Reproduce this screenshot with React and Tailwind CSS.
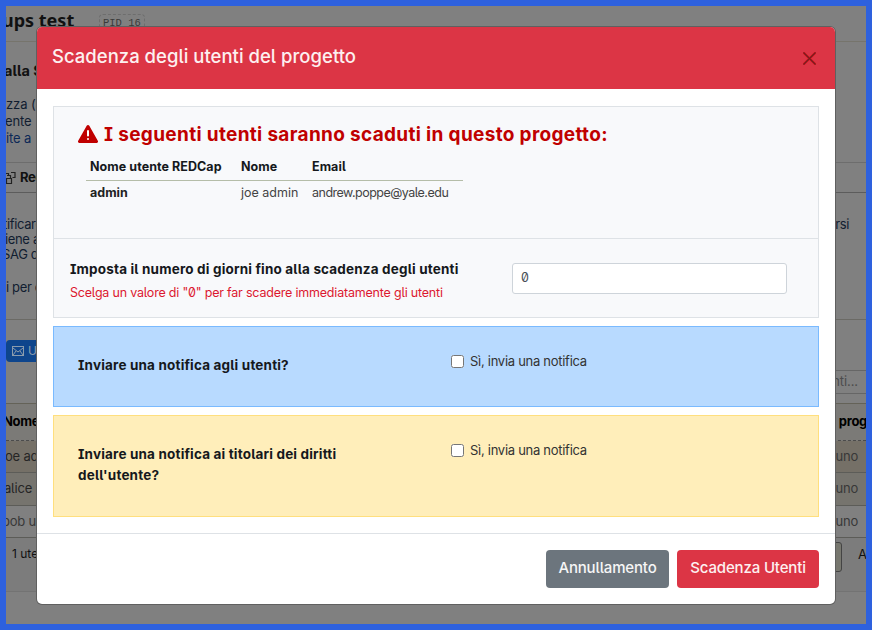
import React from "react";

const PAGE_TEXT = "whitespace-pre text-[13px] leading-[16px] tracking-[-0.35px] text-[#111d30]";

function Row({ className, left, right }) {
  return (
    <div className={`flex justify-between overflow-hidden ${className}`}>
      <div className="flex shrink-0 items-center whitespace-pre">{left}</div>
      <div className="flex shrink-0 items-center whitespace-pre">{right}</div>
    </div>
  );
}

function Page() {
  return (
    <div className="flex h-[618px] w-[860px] flex-col overflow-hidden bg-[#808080] text-[13px] text-[#111]">
      <div className="flex h-9 shrink-0 border-b border-[#76746c]">
        <h1 className="-ml-1 w-[97px] shrink-0 pt-px font-['Noto_Sans',sans-serif] text-[18px] font-bold leading-[26px]">ups test</h1>
        <span className="mt-2 h-5 rounded border border-dashed border-[#6e6e6e] px-[3px] font-['Liberation_Mono',monospace] text-[10.5px] leading-[16px] text-[#3a3a3a]">PID 16</span>
      </div>
      <div className="h-[121px] shrink-0 overflow-hidden border-b border-[#6d6d6d]">
        <h2 className="-ml-0.5 mt-5 whitespace-pre text-[14.5px] font-bold leading-[18px]">alla S</h2>
        <div className="mt-[16px] whitespace-pre text-[13px] leading-[17px] tracking-[-0.1px] text-[#111d30]">
          <p>zza (S</p>
          <p className="-ml-px">ente</p>
          <p className="text-[#0c2857]">ite a</p>
        </div>
      </div>
      <div className="flex h-[30px] shrink-0 items-center border-b border-[#5c5c5c] font-bold">
        <svg className="-ml-1 mr-1 size-[14px] shrink-0" viewBox="0 0 14 14" fill="none" stroke="#222" strokeWidth="1.2">
          <path d="M2 5V2.500h4.500V5M5 4.500h3.500v3M9 1.500h4v5h-2.500M4.500 7.500h5v5h-5z" />
        </svg>
        <span className="text-[13px] tracking-[-0.4px]">Reg</span>
      </div>
      <div className="h-[127px] shrink-0 overflow-hidden border-b border-[#6b6a65] pt-[23px]">
        <Row className="h-[16px]" left={<span className={PAGE_TEXT + " -ml-[3px]"}>tificare</span>} right={<span className={PAGE_TEXT + " pr-[17px]"}>rsi</span>} />
        <p className={PAGE_TEXT + " -ml-px -mt-px h-[15px]"}>iene a</p>
        <p className={PAGE_TEXT + " -ml-1 h-[15px]"}>SAG d</p>
        <p className={PAGE_TEXT + " mt-[18px]"}>i per o</p>
      </div>
      <div className="flex h-[84px] shrink-0 flex-col justify-between border-b border-[#646258] pb-[9px] pt-[20px]">
        <div className="flex h-[22px] w-[80px] shrink-0 items-center gap-1 rounded bg-[#0e458c] pl-[6px] text-[12px] text-[#8b9cad]">
          <svg className="h-[10px] w-[12px]" viewBox="0 0 12 10" fill="none" stroke="currentColor">
            <rect x=".5" y=".5" width="11" height="9" />
            <path d="m1 2 5 4 5-4M1 9l3-4M11 9 8 5" />
          </svg>
          <span>Ut</span>
        </div>
        <div className="-mt-3 flex h-6 shrink-0 items-center self-end border-y border-[#666] pr-[9px] text-[13px] tracking-[-0.1px] text-[#4c4c4c]"><span className="-mr-px">utenti...</span></div>
      </div>
      <Row className="h-[37px] shrink-0 border-b border-dashed border-[#4b4b4b] bg-[#7b7a77] font-bold tracking-[-0.3px] text-black" left={<span className="-ml-[3px]">Nome</span>} right={<span className="-mr-px">prog</span>} />
      <Row className="h-8 shrink-0 border-b border-[#5c5c58] bg-[#757067] tracking-[-0.2px] text-[#252525]" left={<span className="-ml-1">joe ad</span>} right={<span className="pr-2 text-[#383838]">Nessuno</span>} />
      <Row className="h-[33px] shrink-0 border-b border-[#5c5c58] bg-[#76746e] tracking-[-0.2px] text-[#252525]" left={<span className="-ml-0.5">alice m</span>} right={<span className="pr-2 text-[#383838]">Nessuno</span>} />
      <Row className="h-8 shrink-0 border-b border-[#5c5c58] bg-[#808080] tracking-[-0.2px] text-[#383838]" left={<span className="-ml-1">bob us</span>} right={<span className="pr-2 text-[#383838]">Nessuno</span>} />
      <div className="flex h-[54px] shrink-0 justify-between border-b border-[#737373] bg-[#7c7c7c]">
        <span className="pl-1.5 pt-[7px] text-[12px]">1 ute</span>
        <div className="flex">
          <span className="mt-1 h-[30px] w-10 rounded-[3px] border border-[#444] bg-[#77776f]" />
          <span className="-mr-[1px] pl-[16px] pt-[7px] text-[13px]">A</span>
        </div>
      </div>
    </div>
  );
}

function Notice({ className, children }) {
  return (
    <section className={`flex border pl-6 ${className}`}>
      <h3 className="w-[373px] pr-[70px] text-[13.5px] font-bold leading-[21px] tracking-[0.17px] text-[#15181c]">{children}</h3>
      <label className="-mt-[5px] flex h-[22px] items-center gap-[6px] text-[13px] tracking-[-0.28px] text-[#333]">
        <input type="checkbox" className="size-[13px]" />
        <span className="pt-px">Sì, invia una notifica</span>
      </label>
    </section>
  );
}

function Modal() {
  return (
    <div role="dialog" className="absolute left-[37px] top-[27px] flex h-[577px] w-[798px] flex-col overflow-hidden rounded-[5px] bg-white shadow-[0_0_0_1px_#606060]">
      <header className="flex h-[62px] shrink-0 items-center justify-between bg-[#dc3545] pl-[15px] pr-[19px]">
        <h2 className="pb-[3px] text-[18.5px] font-medium tracking-[0.01px] text-[#fdf0f0]">Scadenza degli utenti del progetto</h2>
        <svg className="size-[13px]" viewBox="0 0 13 13" fill="none">
          <path stroke="#b40d12" strokeWidth="2" d="m.5.5 12 12M12.500.5l-12 12" />
          <path stroke="#5c2a2c" strokeWidth=".9" d="m.5.5 12 12M12.500.5l-12 12" />
        </svg>
      </header>
      <main className="flex grow flex-col gap-2 px-4 pt-[17px]">
        <section className="h-[212px] shrink-0 border border-[#dee2e6] bg-[#f8f9fb]">
          <div className="h-[132px] border-b border-[#dee2e6] pl-6 pt-[15px]">
            <h3 className="flex h-6 items-center gap-[6px] whitespace-nowrap text-[19px] font-bold tracking-[0.33px] text-[#c00000]">
              <svg className="mb-px h-[18px] w-5 shrink-0" viewBox="0 0 20 18">
                <path fill="currentColor" d="M8.700.8a1.500 1.500 0 0 1 2.600 0l8.500 14.900a1.500 1.500 0 0 1-1.300 2.300h-17a1.500 1.500 0 0 1-1.300-2.300z" />
                <path stroke="#fff" strokeWidth="2" strokeLinecap="round" d="M10 6v4.500M10 14v.1" />
              </svg>
              <span className="pt-0.5">I seguenti utenti saranno scaduti in questo progetto:</span>
            </h3>
            <table className="ml-2 mt-[7px] w-[377px] table-fixed border-collapse text-left text-[12.500px] leading-[18px]">
              <thead>
                <tr className="h-[27px] border-b border-[#b5bda8] tracking-[0.06px] text-[#15181c]">
                  <th className="w-[151px] pl-1 pt-0.5">Nome utente REDCap</th>
                  <th className="w-[71px] pl-1 pt-0.5">Nome</th>
                  <th className="pl-1 pt-0.5">Email</th>
                </tr>
              </thead>
              <tbody>
                <tr className="h-[25px] whitespace-nowrap text-[#444]">
                  <td className="pl-1 font-bold text-[#222]">admin</td>
                  <td className="pl-1">joe admin</td>
                  <td className="pl-1 tracking-[-0.5px]">andrew.poppe@yale.edu</td>
                </tr>
              </tbody>
            </table>
          </div>
          <div className="flex h-[78px] items-start pl-4">
            <div className="w-[442px] whitespace-nowrap pt-[19px]">
              <p className="text-[13.5px] font-bold leading-[22px] tracking-[0.17px] text-[#15181c]">Imposta il numero di giorni fino alla scadenza degli utenti</p>
              <p className="pt-[3px] text-[12.500px] leading-[20px] tracking-[-0.2px] text-[#dc1830]">Scelga un valore di "0" per far scadere immediatamente gli utenti</p>
            </div>
            <input defaultValue="0" className="mt-6 h-[31px] w-[275px] rounded-[3px] border border-[#ced4da] bg-white px-2 pb-[3px] text-[12.500px] text-[#495057]" />
          </div>
        </section>
        <Notice className="h-[81px] shrink-0 border-[#7abaff] bg-[#b8daff] pt-7">Inviare una notifica agli utenti?</Notice>
        <Notice className="h-[102px] shrink-0 border-[#ffdf7e] bg-[#ffeeba] pt-7">Inviare una notifica ai titolari dei diritti dell'utente?</Notice>
      </main>
      <footer className="flex h-[71px] shrink-0 justify-end gap-2 border-t border-[#dee2e6] px-4 pt-4">
        <button className="h-[38px] w-[123px] rounded-[4px] bg-[#6c757d] pb-[2px] text-[15px] font-medium tracking-[-0.15px] text-[#f6f6f6]">Annullamento</button>
        <button className="h-[38px] w-[142px] rounded-[4px] bg-[#dc3545] pb-[2px] text-[15px] font-medium tracking-[-0.15px] text-[#fdf0f0]">Scadenza Utenti</button>
      </footer>
    </div>
  );
}

export default function App() {
  return (
    <div className="relative h-[630px] w-[872px] overflow-hidden bg-[#2e61de] p-1.5 font-['Inter','Noto_Sans',sans-serif] [font-feature-settings:'zero','cv05','cv08']">
      <Page />
      <Modal />
    </div>
  );
}
